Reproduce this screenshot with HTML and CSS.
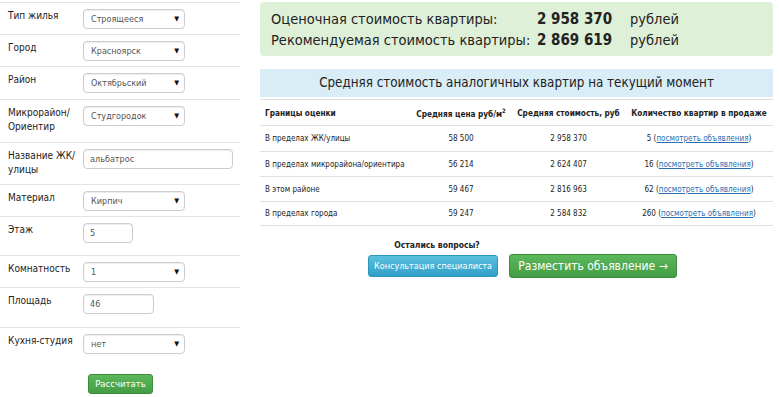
FILE: index.html
```html
<!DOCTYPE html>
<html lang="ru">
<head>
<meta charset="utf-8">
<link rel="stylesheet" href="styles.css">
</head>
<body>
<div class="page">
  <div class="form">
    <div class="row"><div class="label">Тип жилья</div><div class="select"><span>Строящееся</span><i>▼</i></div></div>
    <div class="row"><div class="label">Город</div><div class="select"><span>Красноярск</span><i>▼</i></div></div>
    <div class="row row--33"><div class="label">Район</div><div class="select"><span>Октябрьский</span><i>▼</i></div></div>
    <div class="row row--two"><div class="label">Микрорайон/<br>Ориентир</div><div class="select"><span>Студгородок</span><i>▼</i></div></div>
    <div class="row row--name"><div class="label">Название ЖК/<br>улицы</div><div class="input input--wide">альбатрос</div></div>
    <div class="row"><div class="label">Материал</div><div class="select"><span>Кирпич</span><i>▼</i></div></div>
    <div class="row row--floor"><div class="label">Этаж</div><div class="input input--small">5</div></div>
    <div class="row"><div class="label">Комнатность</div><div class="select"><span>1</span><i>▼</i></div></div>
    <div class="row row--area"><div class="label">Площадь</div><div class="input input--mid">46</div></div>
    <div class="row row--33"><div class="label">Кухня-студия</div><div class="select"><span>нет</span><i>▼</i></div></div>
    <div class="calc"><button class="btn btn--green btn--calc">Рассчитать</button></div>
  </div>
  <div class="results">
    <div class="summary">
      <div class="sum-line"><span class="sum-label">Оценочная стоимость квартиры:</span><b class="sum-value">2 958 370</b><span>рублей</span></div>
      <div class="sum-line"><span class="sum-label">Рекомендуемая стоимость квартиры:</span><b class="sum-value">2 869 619</b><span>рублей</span></div>
    </div>
    <div class="panel-title">Средняя стоимость аналогичных квартир на текущий момент</div>
    <table class="table">
      <thead>
        <tr><th class="c1">Границы оценки</th><th class="c2">Средняя цена руб/м<sup>2</sup></th><th class="c3">Средняя стоимость, руб</th><th class="c4">Количество квартир в продаже</th></tr>
      </thead>
      <tbody>
        <tr class="first"><td class="c1">В пределах ЖК/улицы</td><td>58 500</td><td>2 958 370</td><td>5 (<a href="#">посмотреть объявления</a>)</td></tr>
        <tr><td class="c1">В пределах микрорайона/ориентира</td><td>56 214</td><td>2 624 407</td><td>16 (<a href="#">посмотреть объявления</a>)</td></tr>
        <tr><td class="c1">В этом районе</td><td>59 467</td><td>2 816 963</td><td>62 (<a href="#">посмотреть объявления</a>)</td></tr>
        <tr><td class="c1">В пределах города</td><td>59 247</td><td>2 584 832</td><td>260 (<a href="#">посмотреть объявления</a>)</td></tr>
      </tbody>
    </table>
    <div class="questions">
      <div class="q-title">Остались вопросы?</div>
      <div class="q-buttons">
        <button class="btn btn--blue">Консультация специалиста</button>
        <button class="btn btn--green btn--big">Разместить объявление →</button>
      </div>
    </div>
  </div>
</div>
</body>
</html>
```
FILE: styles.css
```css
* { box-sizing: border-box; }
body { margin: 0; background: #fff; font-family: "DejaVu Sans Condensed", "Liberation Sans", sans-serif; color: #222; }
.page { display: flex; align-items: flex-start; }
.form { width: 240px; flex: none; padding-top: 2px; }
.row { display: flex; border-top: 1px solid #e4e4e4; padding: 6px 0 0 8px; height: 32px; }
.row--33 { height: 33px; }
.row--two { height: 43px; }
.row--name { height: 42px; }
.row--floor { height: 39px; }
.row--area { height: 40px; }
.label { width: 75px; flex: none; font-size: 10px; line-height: 14px; color: #222; white-space: nowrap; }
.select { width: 102px; height: 20px; border: 1px solid #ccc; border-radius: 4px; box-shadow: inset 0 1px 1px rgba(0,0,0,.075); display: flex; align-items: center; justify-content: space-between; padding: 0 5px 0 7px; font-size: 9px; color: #555; }
.select i { font-style: normal; font-size: 7px; color: #111; }
.input { height: 20px; border: 1px solid #ccc; border-radius: 4px; box-shadow: inset 0 1px 1px rgba(0,0,0,.075); font-size: 9px; color: #555; padding: 0 6px; display: flex; align-items: center; }
.input--wide { width: 150px; }
.input--small { width: 50px; }
.input--mid { width: 71px; }
.calc { padding: 12px 0 0 88px; }
.btn { font-family: inherit; border: 1px solid; border-radius: 3px; color: #fff; cursor: pointer; white-space: nowrap; padding: 0; }
.btn--green { background: linear-gradient(#5cb85c, #449d44); border-color: #3d8b3d; }
.btn--calc { width: 65px; height: 20px; font-size: 9.5px; }
.btn--blue { background: linear-gradient(#5bc0de, #31a0c8); border-color: #2a96bd; height: 22px; width: 130px; font-size: 9px; }
.btn--big { height: 24px; width: 168px; font-size: 12px; }
.results { width: 513px; margin-left: 20px; flex: none; }
.summary { background: #dff0d8; border-radius: 4px; height: 54px; margin-top: 2px; padding: 7px 0 0 11px; font-size: 14.5px; color: #222; white-space: nowrap; }
.sum-line { display: flex; line-height: 21px; }
.sum-label { width: 266px; }
.sum-value { width: 93px; font-size: 15px; }
.panel-title { margin-top: 13px; background: #d9edf7; height: 28px; text-align: center; font-size: 13.3px; line-height: 28px; color: #222; white-space: nowrap; }
.table { width: 513px; border-collapse: separate; border-spacing: 0; font-size: 8px; margin-top: 2px; white-space: nowrap; }
.table th, .table td { border-top: 1px solid #e0e0e0; text-align: center; height: 25px; padding: 0 2px; }
.table th { font-weight: bold; font-size: 8.2px; height: 26px; }
.table tr.first td { height: 26px; }
.table .c1 { text-align: left; padding-left: 5px; width: 150px; }
.table .c2 { width: 102px; }
.table .c3 { width: 113px; }
.table sup { font-size: 6px; }
.table a { color: #2a6fb0; }
.table tr:last-child td { border-bottom: 1px solid #e0e0e0; }
.questions { padding: 14px 0 0 108px; }
.q-title { width: 138px; text-align: center; font-size: 8.5px; font-weight: bold; line-height: 11px; padding-bottom: 3px; }
.q-buttons { display: flex; gap: 11px; align-items: center; }
```
